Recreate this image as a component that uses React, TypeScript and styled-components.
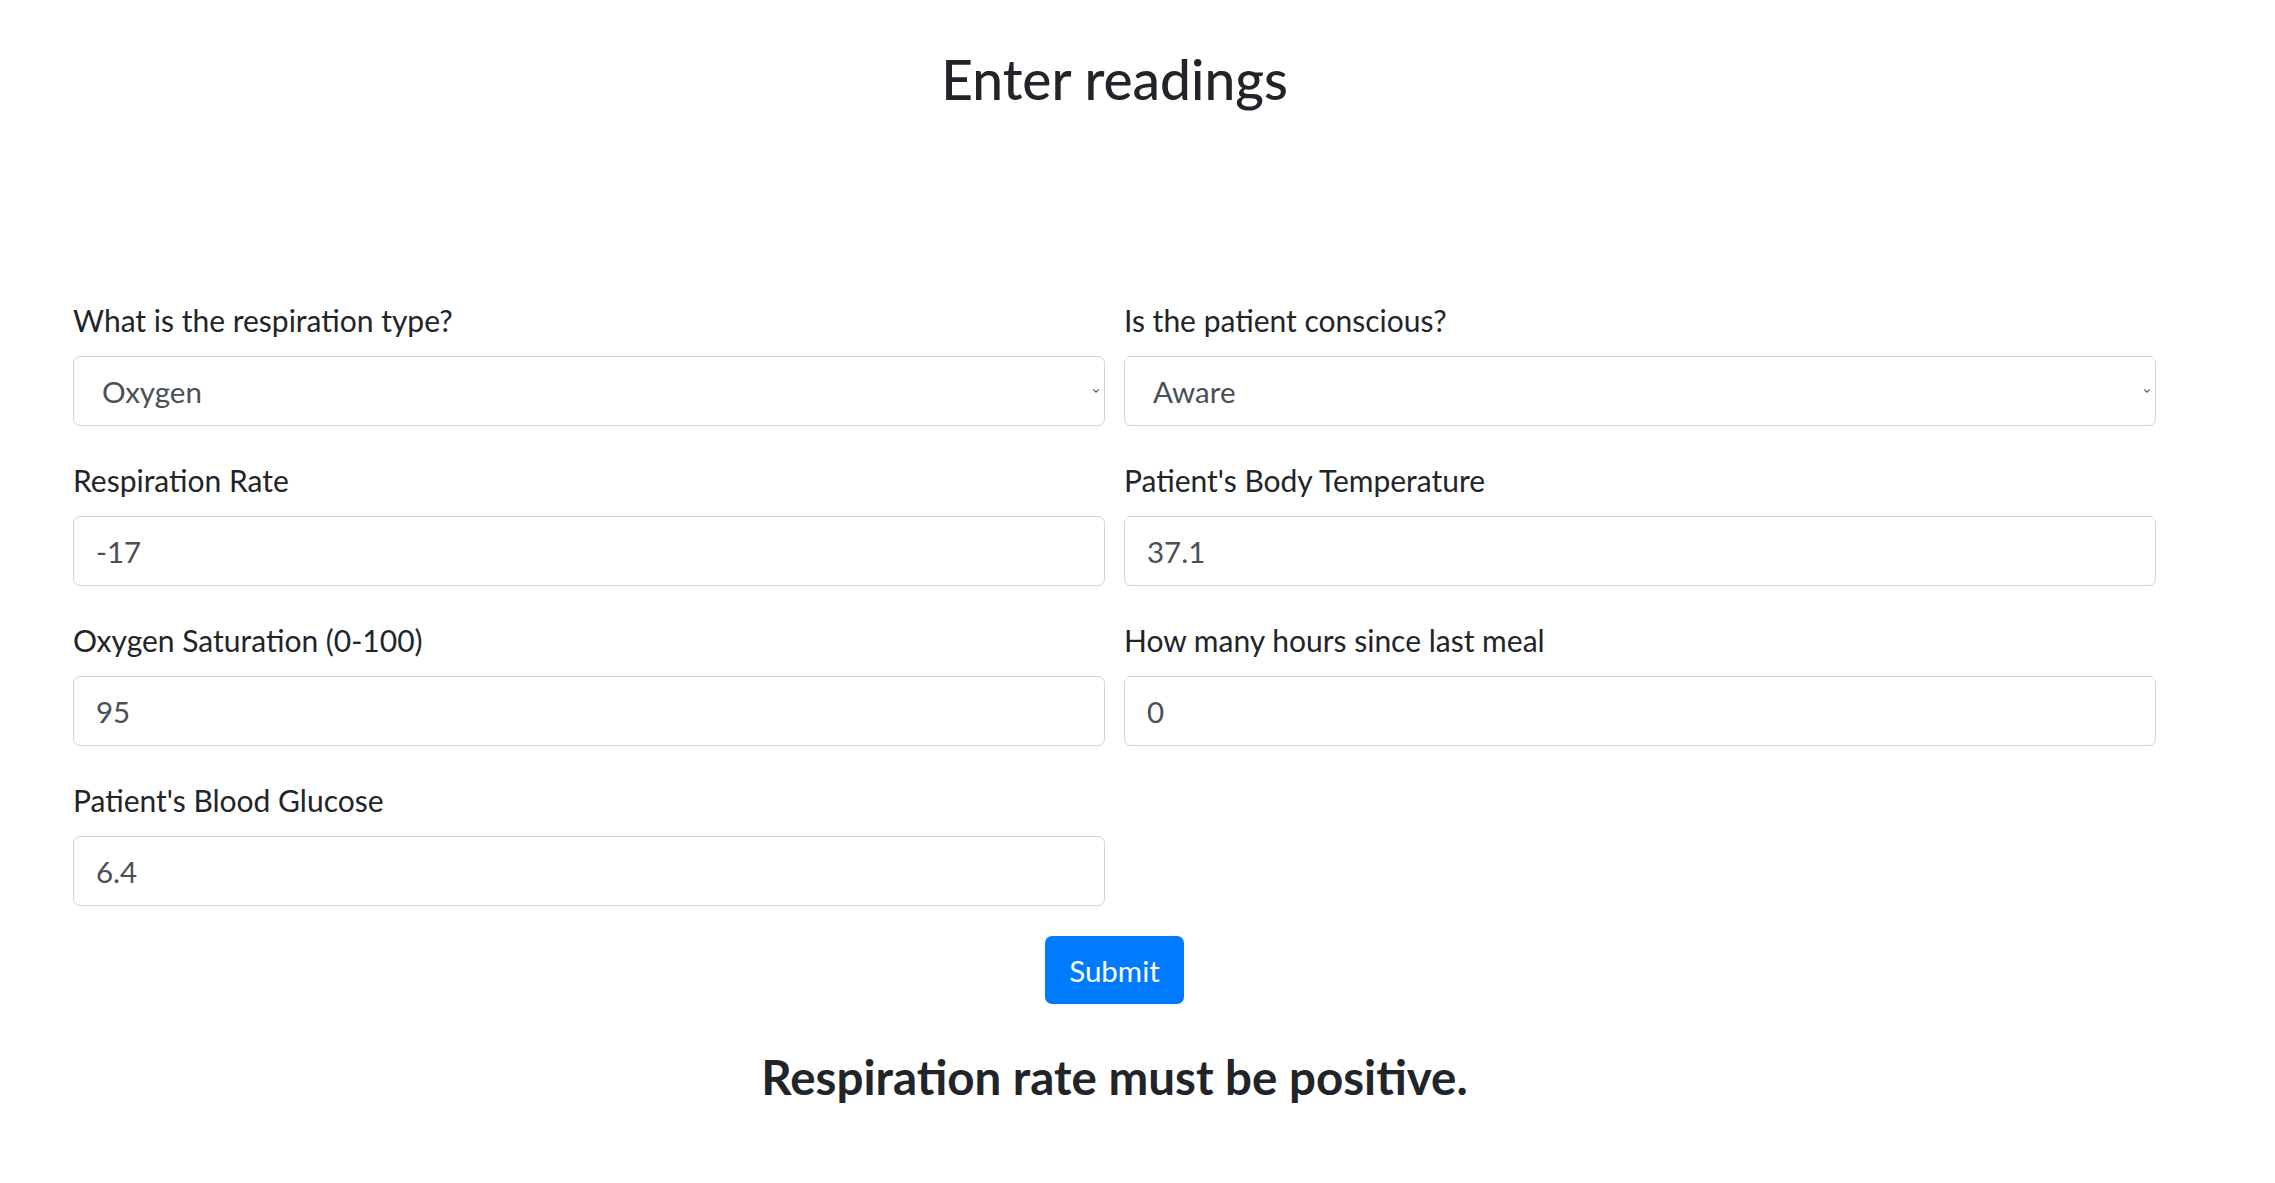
import React from "react";
import styled, { createGlobalStyle } from "styled-components";

const GlobalStyle = createGlobalStyle`
  html, body {
    margin: 0;
    padding: 0;
    background: #ffffff;
  }
  body {
    font-family: Lato, "Noto Sans", "Open Sans", sans-serif;
    color: #212529;
  }
  * { box-sizing: border-box; }
`;

const Page = styled.div`
  padding: 46px 119px 60px 73px;
`;

const Title = styled.h1`
  margin: 0;
  font-size: 55px;
  line-height: 66px;
  font-weight: 500;
  text-align: center;
  color: #212529;
`;

const Form = styled.form`
  margin-top: 188px;
  display: flex;
  flex-direction: column;
  align-items: stretch;
`;

const FieldGrid = styled.div`
  display: grid;
  grid-template-columns: 1fr 1fr;
  column-gap: 19px;
  row-gap: 34px;
`;

const Group = styled.div`
  display: flex;
  flex-direction: column;
`;

const Label = styled.label`
  font-size: 30px;
  line-height: 40px;
  margin-bottom: 16px;
  color: #212529;
`;

const fieldBase = `
  height: 70px;
  width: 100%;
  border: 1px solid #ced4da;
  border-radius: 7px;
  background-color: #ffffff;
  font-family: Lato, "Noto Sans", "Open Sans", sans-serif;
  font-size: 29.5px;
  color: #495057;
  outline: none;
  margin: 0;
`;

const Input = styled.input`
  ${fieldBase}
  padding: 0 22px;
`;

const Select = styled.select`
  ${fieldBase}
  padding: 0 30px 0 28px;
  appearance: none;
  -webkit-appearance: none;
  background-image: url("data:image/svg+xml,%3Csvg xmlns='http://www.w3.org/2000/svg' width='10' height='7' viewBox='0 0 10 7'%3E%3Cpath d='M1.5 1.5 L5 5 L8.5 1.5' fill='none' stroke='%23555' stroke-width='1.4'/%3E%3C/svg%3E");
  background-repeat: no-repeat;
  background-position: right 4px center;
  background-size: 8px 6px;
`;

const ButtonRow = styled.div`
  display: flex;
  justify-content: center;
  margin-top: 30px;
`;

const SubmitButton = styled.button`
  height: 68px;
  padding: 0 24px;
  border: none;
  border-radius: 7px;
  background: #007bff;
  color: #ffffff;
  font-family: Lato, "Noto Sans", "Open Sans", sans-serif;
  font-size: 29.5px;
  cursor: pointer;
`;

const ErrorText = styled.h3`
  margin: 44px 0 0;
  font-size: 47.5px;
  line-height: 58px;
  font-weight: 700;
  text-align: center;
  color: #212529;
`;

type Field = {
  id: string;
  label: string;
  kind: "select" | "input";
  value: string;
  options?: string[];
};

const fields: Field[] = [
  { id: "resp-type", label: "What is the respiration type?", kind: "select", value: "Oxygen", options: ["Oxygen", "Air"] },
  { id: "conscious", label: "Is the patient conscious?", kind: "select", value: "Aware", options: ["Aware", "Voice", "Pain", "Unresponsive"] },
  { id: "resp-rate", label: "Respiration Rate", kind: "input", value: "-17" },
  { id: "temp", label: "Patient's Body Temperature", kind: "input", value: "37.1" },
  { id: "spo2", label: "Oxygen Saturation (0-100)", kind: "input", value: "95" },
  { id: "meal", label: "How many hours since last meal", kind: "input", value: "0" },
  { id: "glucose", label: "Patient's Blood Glucose", kind: "input", value: "6.4" },
];

export default function App() {
  return (
    <>
      <GlobalStyle />
      <Page>
        <Title>Enter readings</Title>
        <Form onSubmit={(e) => e.preventDefault()}>
          <FieldGrid>
            {fields.map((f) => (
              <Group key={f.id}>
                <Label htmlFor={f.id}>{f.label}</Label>
                {f.kind === "select" ? (
                  <Select id={f.id} defaultValue={f.value}>
                    {f.options!.map((o) => (
                      <option key={o} value={o}>
                        {o}
                      </option>
                    ))}
                  </Select>
                ) : (
                  <Input id={f.id} type="text" defaultValue={f.value} />
                )}
              </Group>
            ))}
          </FieldGrid>
          <ButtonRow>
            <SubmitButton type="submit">Submit</SubmitButton>
          </ButtonRow>
        </Form>
        <ErrorText>Respiration rate must be positive.</ErrorText>
      </Page>
    </>
  );
}
